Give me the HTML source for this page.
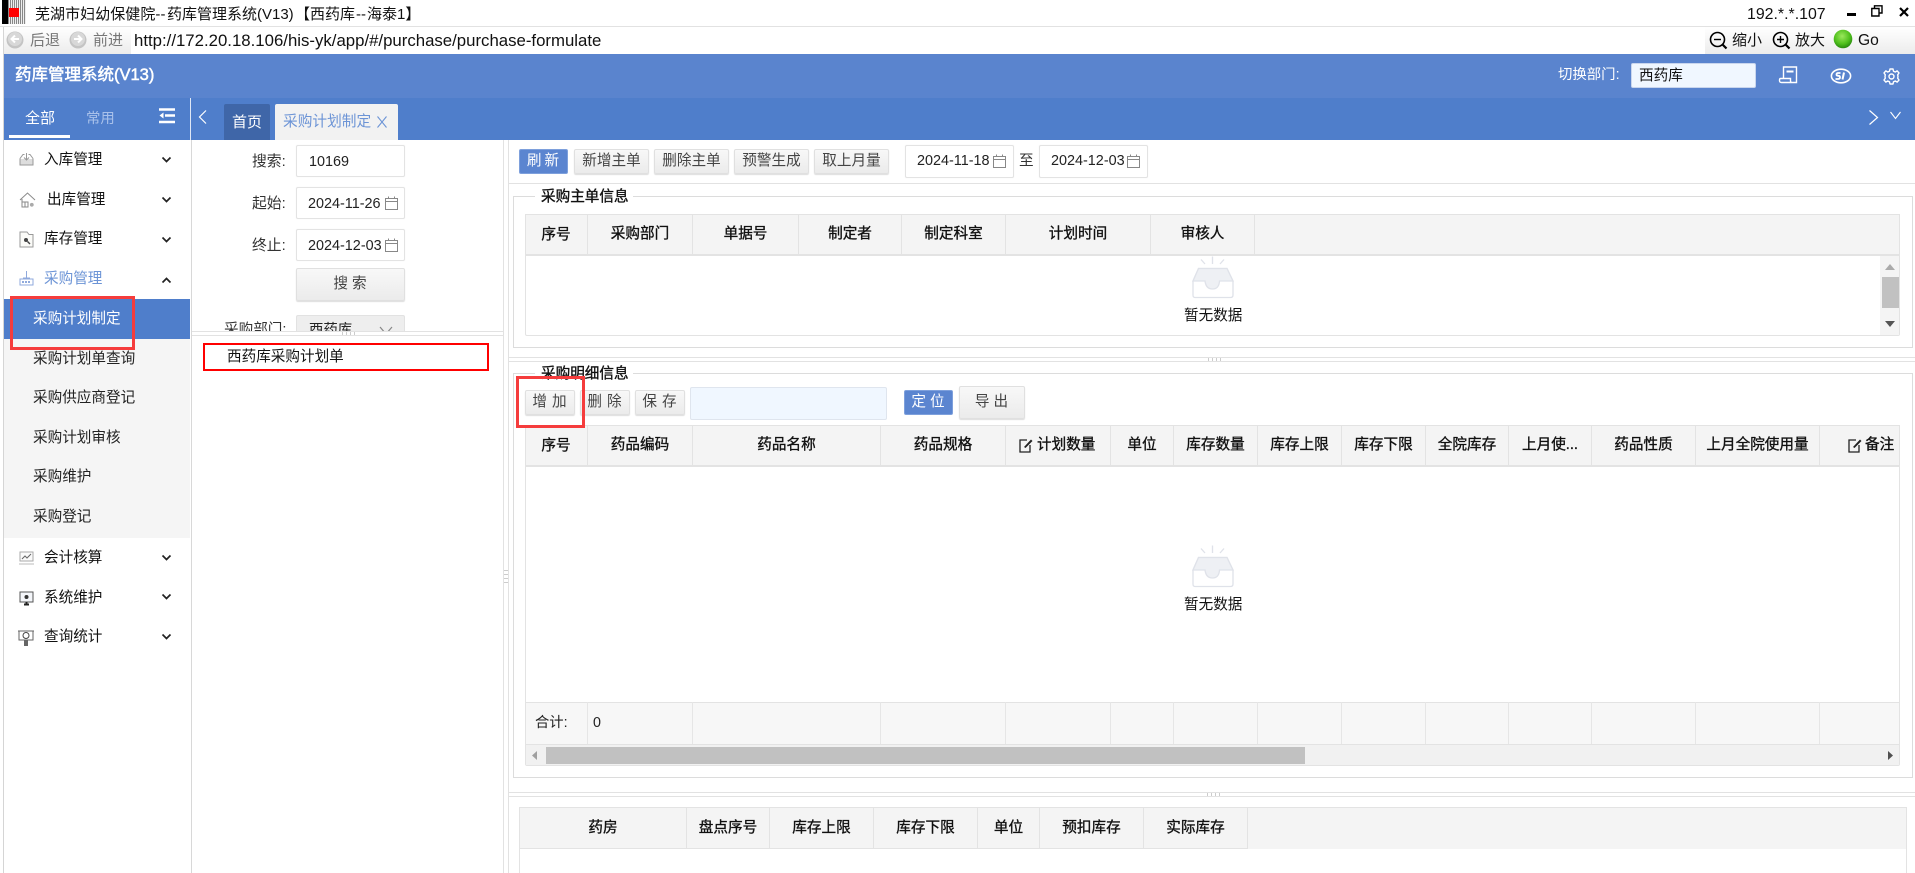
<!DOCTYPE html>
<html lang="zh"><head><meta charset="utf-8"><title>药库管理系统</title>
<style>
*{box-sizing:border-box}
html,body{margin:0;padding:0;width:1915px;height:873px;overflow:hidden;background:#fff;font-family:"Liberation Sans","Noto Sans CJK SC",sans-serif;font-size:14.5px;color:#111}
body{position:relative}
div,span,svg{position:absolute}
.t{white-space:nowrap;line-height:20px;height:20px}
.w{color:#fff}
.l{background:#e2e2e2}
.inp{background:#fff;border:1px solid #e3e3e3;border-radius:2px;box-shadow:0 0 1px #eee}
.b{background:linear-gradient(#f8f8f8,#ebebeb);border:1px solid #e0e0e0;border-radius:2px;box-shadow:0 1px 1px #ddd;text-align:center;color:#444;white-space:nowrap;font-size:14.6px}
.bl{background:#5b85d0;border:1px solid #7ea0dc;border-radius:2px;text-align:center;color:#fff;white-space:nowrap}
.h{text-align:center;font-weight:400;-webkit-text-stroke:.35px #111;white-space:nowrap;border-right:1px solid #e3e3e3;color:#111;font-size:14.6px;overflow:hidden}
.fs{border:1px solid #dcdcdc;background:transparent}
.hd{background:#f4f4f4;border:1px solid #e3e3e3;border-bottom:2px solid #e3e3e3}
.side{left:44px;color:#111;font-size:14.6px}
.sub{left:33px;font-size:14.6px;color:#222}
.ch{left:161px}
.rr{border:3px solid #f53c3c;background:transparent}
.leg{font-size:14.6px;font-weight:400;-webkit-text-stroke:.35px #111;color:#111}
</style></head><body>

<!-- title bar -->
<div style="left:2px;top:0;width:24px;height:24px;background:repeating-linear-gradient(90deg,#888 0,#888 1px,#eee 1px,#eee 2px)"></div>
<div style="left:2px;top:0;width:6px;height:24px;background:#000"></div>
<div style="left:9px;top:8px;width:10px;height:9px;background:#f00"></div>
<div class="t" style="left:35px;top:5px;font-size:15px;color:#111;letter-spacing:.05px">芜湖市妇幼保健院--</div>
<div class="t" style="left:167px;top:5px;font-size:15px;color:#111">药库管理系统(V13)</div>
<div class="t" style="left:295px;top:5px;font-size:15px;color:#111">【西药库</div>
<div class="t" style="left:356px;top:5px;font-size:15px;color:#111">--</div>
<div class="t" style="left:367px;top:5px;font-size:15px;color:#111">海泰1】</div>
<div class="t" style="left:1747px;top:5px;font-size:15.9px">192.*.*.107</div>
<div style="left:1847px;top:13px;width:9px;height:3px;background:#000"></div>
<svg style="left:1871px;top:5px" width="12" height="12" viewBox="0 0 12 12"><path d="M3.5 3V.8H11V8H8.5M.8 3.5H8V11H.8Z" fill="none" stroke="#000" stroke-width="1.4"/></svg>
<svg style="left:1899px;top:7px" width="10" height="10" viewBox="0 0 10 10"><path d="M1 1L9 9M9 1L1 9" stroke="#000" stroke-width="2.2"/></svg>
<div class="l" style="left:0;top:26px;width:1915px;height:1px"></div>

<!-- address bar -->
<div style="left:3px;top:27px;width:1px;height:846px;background:#d5d5d5"></div>
<div style="left:4px;top:27px;width:127px;height:27px;background:linear-gradient(#fff,#ececec)"></div>
<div style="left:1705px;top:27px;width:210px;height:27px;background:linear-gradient(#fff,#ececec)"></div>
<svg style="left:6px;top:30px" width="18" height="20" viewBox="0 0 18 20"><circle cx="9" cy="10" r="8.5" fill="#c4c4c4"/><circle cx="9" cy="9" r="7" fill="#d8d8d8"/><path d="M13 9H6M9 5.5L5.5 9L9 12.5" stroke="#fff" stroke-width="2" fill="none"/></svg>
<div class="t" style="left:30px;top:31px;font-size:15px;color:#777">后退</div>
<svg style="left:69px;top:30px" width="18" height="20" viewBox="0 0 18 20"><circle cx="9" cy="10" r="8.5" fill="#c4c4c4"/><circle cx="9" cy="9" r="7" fill="#d8d8d8"/><path d="M5 9H12M9 5.5L12.5 9L9 12.5" stroke="#fff" stroke-width="2" fill="none"/></svg>
<div class="t" style="left:93px;top:31px;font-size:15px;color:#777">前进</div>
<div class="t" style="left:134px;top:31px;font-size:16.8px;color:#111">http://172.20.18.106/his-yk/app/#/purchase/purchase-formulate</div>
<svg style="left:1709px;top:31px" width="19" height="19" viewBox="0 0 19 19"><circle cx="8.5" cy="8.5" r="7" fill="none" stroke="#000" stroke-width="1.6"/><path d="M5 8.5H12" stroke="#000" stroke-width="1.4"/><path d="M13.5 13.5L17.5 17.5" stroke="#000" stroke-width="2.2"/></svg>
<div class="t" style="left:1732px;top:31px;font-size:15px">缩小</div>
<svg style="left:1772px;top:31px" width="19" height="19" viewBox="0 0 19 19"><circle cx="8.5" cy="8.5" r="7" fill="none" stroke="#000" stroke-width="1.6"/><path d="M5 8.5H12M8.5 5V12" stroke="#000" stroke-width="1.4"/><path d="M13.5 13.5L17.5 17.5" stroke="#000" stroke-width="2.2"/></svg>
<div class="t" style="left:1795px;top:31px;font-size:15px">放大</div>
<svg style="left:1833px;top:29px" width="20" height="21" viewBox="0 0 20 21"><defs><radialGradient id="gb" cx=".45" cy=".35" r=".7"><stop offset="0" stop-color="#9be85c"/><stop offset=".6" stop-color="#4fbf1c"/><stop offset="1" stop-color="#1f7d0c"/></radialGradient></defs><circle cx="10" cy="10" r="9.3" fill="url(#gb)"/></svg>
<div class="t" style="left:1858px;top:31px;font-size:15.6px">Go</div>

<!-- header -->
<div style="left:4px;top:54px;width:1911px;height:44px;background:#5a84ce"></div>
<div class="t w" style="left:15px;top:65px;font-size:16.5px;-webkit-text-stroke:.5px #fff">药库管理系统(V13)</div>
<div class="t w" style="left:1558px;top:65px;font-size:14.4px">切换部门:</div>
<div style="left:1631px;top:63px;width:125px;height:25px;background:#f0f7ff;border:1px solid #c9d6ee;border-radius:2px"></div>
<div class="t" style="left:1639px;top:66px;font-size:14.6px">西药库</div>
<svg style="left:1778px;top:66px" width="20" height="18" viewBox="0 0 20 18"><path d="M5.5 12V1H18.5V16.5H14M2.5 12.5H12.5V15Q12.5 16.5 14 16.5H3.5Q1.5 16.5 1.5 14.5Q1.5 12.5 2.5 12.5" fill="none" stroke="#fff" stroke-width="1.4"/><path d="M8.5 5.5H15.5" stroke="#fff" stroke-width="2"/></svg>
<svg style="left:1830px;top:67px" width="22" height="18" viewBox="0 0 22 18"><ellipse cx="11" cy="9" rx="9.6" ry="6.8" fill="none" stroke="#fff" stroke-width="1.6"/><path d="M10.5 6H8Q6.5 6 6.5 7.4Q6.5 8.8 8.3 8.8Q10 8.8 10 10.4Q10 12 8 12H5.5" fill="none" stroke="#fff" stroke-width="1.8"/><path d="M14 5.5L12.5 12.5" stroke="#fff" stroke-width="2"/></svg>
<svg style="left:1883px;top:68px" width="17" height="17" viewBox="0 0 17 17"><path d="M7 1H10L10.5 3.2L12.3 4L14.2 2.9L16 5L14.7 6.8L15 8.5L14.7 10.2L16 12L14.2 14.1L12.3 13L10.5 13.8L10 16H7L6.5 13.8L4.7 13L2.8 14.1L1 12L2.3 10.2L2 8.5L2.3 6.8L1 5L2.8 2.9L4.7 4L6.5 3.2Z" fill="none" stroke="#fff" stroke-width="1.4" stroke-linejoin="round"/><circle cx="8.5" cy="8.5" r="2.5" fill="none" stroke="#fff" stroke-width="1.4"/></svg>

<!-- tab bar -->
<div style="left:4px;top:98px;width:1911px;height:42px;background:#4f7ecb"></div>
<div style="left:190px;top:98px;width:1px;height:42px;background:#dfe7f5"></div>
<div class="t w" style="left:25px;top:109px;font-size:15px">全部</div>
<div style="left:9px;top:135px;width:61px;height:3px;background:#fff"></div>
<div class="t" style="left:86px;top:109px;font-size:14.4px;color:#a9c1ea">常用</div>
<svg style="left:159px;top:108px" width="16" height="16" viewBox="0 0 16 16"><path d="M0 1.5H16M6 7.5H16M0 14H16" stroke="#fff" stroke-width="2.4"/><path d="M4.5 4.5L0.5 7.5L4.5 10.5Z" fill="#fff"/></svg>
<svg style="left:198px;top:109px" width="10" height="16" viewBox="0 0 10 16"><path d="M8 1.5L1.5 8L8 14.5" fill="none" stroke="#fff" stroke-width="1.2"/></svg>
<div class="w" style="left:224px;top:104px;width:46px;height:36px;background:#3f66a8;text-align:center;line-height:38px;font-size:15px;border-radius:2px 2px 0 0">首页</div>
<div style="left:275px;top:104px;width:123px;height:36px;background:#f2f2f2;border-radius:2px 2px 0 0"></div>
<div class="t" style="left:283px;top:112px;font-size:14.7px;color:#6c94d6">采购计划制定</div>
<svg style="left:377px;top:116px" width="10" height="12" viewBox="0 0 10 12"><path d="M.5 .5L9.5 11.5M9.5 .5L.5 11.5" stroke="#6c94d6" stroke-width="1.1"/></svg>
<svg style="left:1868px;top:109px" width="11" height="17" viewBox="0 0 11 17"><path d="M1.5 1.5L9.5 8.5L1.5 15.5" fill="none" stroke="#fff" stroke-width="1.2"/></svg>
<svg style="left:1890px;top:111px" width="11" height="9" viewBox="0 0 11 9"><path d="M.5 1L5.5 7.5L10.5 1" fill="none" stroke="#fff" stroke-width="1.1"/></svg>

<!-- sidebar -->
<div style="left:191px;top:140px;width:1px;height:733px;background:#d8d8d8"></div>
<svg style="left:19px;top:152px" width="15" height="15" viewBox="0 0 15 15"><rect x="1" y="7" width="13" height="6" fill="#ddd"/><path d="M1 6.5L4 2.5H5.5M14 6.5L11 2.5H9.5M1 6.5V13H14V6.5M7.5 1V7.5M5 5.5L7.5 8L10 5.5" fill="none" stroke="#999"/></svg>
<div class="t side" style="top:150px">入库管理</div>
<svg style="left:19px;top:192px" width="17" height="17" viewBox="0 0 17 17"><path d="M1 8L8.5 1L16 8M3 7V15H9V10H3M6 10V15" fill="none" stroke="#8a8a8a"/><circle cx="12.8" cy="12.8" r="1.9" fill="#aaa"/></svg>
<div class="t side" style="top:190px;left:47px">出库管理</div>
<svg style="left:19px;top:231px" width="15" height="17" viewBox="0 0 15 17"><path d="M1 1H8L10 3.5H14V16H1Z" fill="#fbfbf8" stroke="#999"/><circle cx="7" cy="9" r="2" fill="#444"/><path d="M8.5 10.5L11 13" stroke="#444" stroke-width="1.4"/></svg>
<div class="t side" style="top:229px">库存管理</div>
<svg style="left:19px;top:271px" width="15" height="15" viewBox="0 0 15 15"><path d="M7.5 0V7M4 7H11M1 8H14V14H1Z" fill="none" stroke="#8fa9dc"/><path d="M3 11H12" stroke="#8fa9dc" stroke-width="2" stroke-dasharray="2 1"/></svg>
<div class="t side" style="top:269px;color:#6c94d6">采购管理</div>
<svg class="ch" style="top:156px" width="11" height="8" viewBox="0 0 11 8"><path d="M1.5 1.5L5.5 5.5L9.5 1.5" fill="none" stroke="#222" stroke-width="1.7"/></svg>
<svg class="ch" style="top:196px" width="11" height="8" viewBox="0 0 11 8"><path d="M1.5 1.5L5.5 5.5L9.5 1.5" fill="none" stroke="#222" stroke-width="1.7"/></svg>
<svg class="ch" style="top:236px" width="11" height="8" viewBox="0 0 11 8"><path d="M1.5 1.5L5.5 5.5L9.5 1.5" fill="none" stroke="#222" stroke-width="1.7"/></svg>
<svg class="ch" style="top:276px" width="11" height="8" viewBox="0 0 11 8"><path d="M1.5 6.5L5.5 2.5L9.5 6.5" fill="none" stroke="#222" stroke-width="1.7"/></svg>
<div style="left:4px;top:299px;width:186px;height:239px;background:#f5f5f5"></div>
<div style="left:4px;top:299px;width:186px;height:40px;background:#4f7ecb"></div>
<div class="t sub w" style="top:309px;color:#fff">采购计划制定</div>
<div class="t sub" style="top:349px">采购计划单查询</div>
<div class="t sub" style="top:388px">采购供应商登记</div>
<div class="t sub" style="top:428px">采购计划审核</div>
<div class="t sub" style="top:467px">采购维护</div>
<div class="t sub" style="top:507px">采购登记</div>
<svg style="left:19px;top:551px" width="15" height="14" viewBox="0 0 15 14"><path d="M1 1H14V10H1Z" fill="#fafafa" stroke="#aaa"/><path d="M0 13H15" stroke="#bbb"/><path d="M3 8L6 5L8 7L12 3" fill="none" stroke="#666"/></svg>
<div class="t side" style="top:548px">会计核算</div>
<svg style="left:19px;top:591px" width="15" height="15" viewBox="0 0 15 15"><path d="M1 1H14V11H1Z" fill="#f4f6fa" stroke="#555"/><circle cx="7.5" cy="6" r="2" fill="#333"/><path d="M5 13.5H10M7.5 11V14" stroke="#222" stroke-width="2"/></svg>
<div class="t side" style="top:588px">系统维护</div>
<svg style="left:18px;top:630px" width="16" height="16" viewBox="0 0 16 16"><path d="M0 1H16M1 1V10H15V1" fill="none" stroke="#666"/><circle cx="8" cy="5.5" r="3" fill="none" stroke="#444"/><path d="M6 10H10V16H6Z" fill="#666"/></svg>
<div class="t side" style="top:627px">查询统计</div>
<svg class="ch" style="top:554px" width="11" height="8" viewBox="0 0 11 8"><path d="M1.5 1.5L5.5 5.5L9.5 1.5" fill="none" stroke="#222" stroke-width="1.7"/></svg>
<svg class="ch" style="top:593px" width="11" height="8" viewBox="0 0 11 8"><path d="M1.5 1.5L5.5 5.5L9.5 1.5" fill="none" stroke="#222" stroke-width="1.7"/></svg>
<svg class="ch" style="top:633px" width="11" height="8" viewBox="0 0 11 8"><path d="M1.5 1.5L5.5 5.5L9.5 1.5" fill="none" stroke="#222" stroke-width="1.7"/></svg>
<div class="rr" style="left:10px;top:296px;width:125px;height:54px"></div>

<!-- left panel -->
<div class="t" style="left:252px;top:152px;font-size:14.8px;color:#333">搜索:</div>
<div class="inp" style="left:296px;top:145px;width:109px;height:32px"></div>
<div class="t" style="left:309px;top:152px;font-size:14.4px;color:#222">10169</div>
<div class="t" style="left:252px;top:194px;font-size:14.8px;color:#333">起始:</div>
<div class="inp" style="left:296px;top:187px;width:109px;height:32px"></div>
<div class="t" style="left:308px;top:194px;font-size:14.4px;color:#222">2024-11-26</div>
<svg style="left:385px;top:196px" width="13" height="14" viewBox="0 0 13 14"><path d="M.5 2.5H12.5V13.5H.5ZM.5 5.5H12.5M3.5 .5V3M9.5 .5V3" fill="none" stroke="#888"/></svg>
<div class="t" style="left:252px;top:236px;font-size:14.8px;color:#333">终止:</div>
<div class="inp" style="left:296px;top:229px;width:109px;height:32px"></div>
<div class="t" style="left:308px;top:236px;font-size:14.4px;color:#222">2024-12-03</div>
<svg style="left:385px;top:238px" width="13" height="14" viewBox="0 0 13 14"><path d="M.5 2.5H12.5V13.5H.5ZM.5 5.5H12.5M3.5 .5V3M9.5 .5V3" fill="none" stroke="#888"/></svg>
<div class="b" style="left:296px;top:268px;width:109px;height:33px;line-height:31px;letter-spacing:4px;text-indent:3px">搜索</div>
<div style="left:192px;top:315px;width:311px;height:17px;overflow:hidden">
 <div class="t" style="left:32px;top:2px;font-size:14.6px;color:#333;line-height:26px;height:26px">采购部门:</div>
 <div style="left:104px;top:0;width:109px;height:30px;background:#eee;border:1px solid #e2e2e2;border-radius:2px"></div>
 <div class="t" style="left:117px;top:2px;line-height:26px;height:26px;font-size:14.4px;color:#222">西药库</div>
 <svg style="left:187px;top:11px" width="14" height="9" viewBox="0 0 14 9"><path d="M1 1L7 8L13 1" fill="none" stroke="#888" stroke-width="1.2"/></svg>
</div>
<div class="l" style="left:192px;top:331px;width:311px;height:1px"></div>
<div class="l" style="left:192px;top:335px;width:311px;height:1px"></div>
<div style="left:342px;top:332px;width:14px;height:3px;background:repeating-linear-gradient(90deg,#ccc 0,#ccc 1px,#fff 1px,#fff 4px)"></div>
<div style="left:203px;top:343px;width:286px;height:28px;border:2px solid #f00"></div>
<div class="t" style="left:227px;top:347px;font-size:14.6px;color:#111">西药库采购计划单</div>

<!-- vertical splitter -->
<div class="l" style="left:503px;top:140px;width:1px;height:733px"></div>
<div class="l" style="left:508px;top:140px;width:1px;height:733px"></div>
<div style="left:504px;top:568px;width:4px;height:15px;background:repeating-linear-gradient(0deg,#ccc 0,#ccc 1px,#fff 1px,#fff 4px)"></div>

<!-- toolbar -->
<div class="bl" style="left:519px;top:149px;width:49px;height:25px;line-height:23px;letter-spacing:3px;text-indent:2px;font-size:14.6px">刷新</div>
<div class="b" style="left:574px;top:149px;width:75px;height:25px;line-height:23px">新增主单</div>
<div class="b" style="left:654px;top:149px;width:75px;height:25px;line-height:23px">删除主单</div>
<div class="b" style="left:734px;top:149px;width:75px;height:25px;line-height:23px">预警生成</div>
<div class="b" style="left:814px;top:149px;width:75px;height:25px;line-height:23px">取上月量</div>
<div class="inp" style="left:905px;top:145px;width:109px;height:33px"></div>
<div class="t" style="left:917px;top:151px;font-size:14.4px;color:#222">2024-11-18</div>
<svg style="left:993px;top:154px" width="13" height="14" viewBox="0 0 13 14"><path d="M.5 2.5H12.5V13.5H.5ZM.5 5.5H12.5M3.5 .5V3M9.5 .5V3" fill="none" stroke="#888"/></svg>
<div class="t" style="left:1019px;top:151px;font-size:14.6px;color:#333">至</div>
<div class="inp" style="left:1039px;top:145px;width:109px;height:33px"></div>
<div class="t" style="left:1051px;top:151px;font-size:14.4px;color:#222">2024-12-03</div>
<svg style="left:1127px;top:154px" width="13" height="14" viewBox="0 0 13 14"><path d="M.5 2.5H12.5V13.5H.5ZM.5 5.5H12.5M3.5 .5V3M9.5 .5V3" fill="none" stroke="#888"/></svg>
<div class="l" style="left:508px;top:183px;width:1407px;height:1px"></div>

<!-- fieldset 1 -->
<div class="fs" style="left:513px;top:196px;width:1400px;height:152px"></div>
<div style="left:535px;top:190px;width:98px;height:14px;background:#fff"></div>
<div class="t leg" style="left:541px;top:187px">采购主单信息</div>
<div style="left:525px;top:214px;height:122px;border:1px solid #e3e3e3;width:1375px;border-radius:2px"></div>
<div class="hd" style="left:525px;top:214px;width:1375px;height:42px"></div>
<div class="h" style="left:525px;top:215px;width:63px;height:39px;line-height:40px">序号</div>
<div class="h" style="left:588px;top:215px;width:105px;height:39px;line-height:38px">采购部门</div>
<div class="h" style="left:693px;top:215px;width:106px;height:39px;line-height:38px">单据号</div>
<div class="h" style="left:799px;top:215px;width:103px;height:39px;line-height:38px">制定者</div>
<div class="h" style="left:902px;top:215px;width:104px;height:39px;line-height:38px">制定科室</div>
<div class="h" style="left:1006px;top:215px;width:145px;height:39px;line-height:38px">计划时间</div>
<div class="h" style="left:1151px;top:215px;width:104px;height:39px;line-height:38px">审核人</div>
<div style="left:1880px;top:256px;width:19px;height:79px;background:#f4f4f4"></div>
<svg style="left:1885px;top:264px" width="10" height="6" viewBox="0 0 10 6"><path d="M0 6L5 0L10 6Z" fill="#aaa"/></svg>
<div style="left:1882px;top:277px;width:17px;height:31px;background:#c1c1c1"></div>
<svg style="left:1885px;top:321px" width="10" height="6" viewBox="0 0 10 6"><path d="M0 0L5 6L10 0Z" fill="#555"/></svg>
<svg style="left:1192px;top:256px" width="42" height="43" viewBox="0 0 42 43"><path d="M20.5 .5V8M9 3.5L13 8M32 3.5L28 8" stroke="#dfe2e9" stroke-width="1.3" fill="none"/><path d="M6.5 12.5H35L41 25V39Q41 41.5 38.5 41.5H3Q1 41.5 1 39V25Z" fill="#fff" stroke="#dfe2e9" stroke-width="1.3"/><path d="M6.5 12.5H35L41 25H27.5Q27 33 20.5 33Q14 33 13 25H1Z" fill="#eef0f4" stroke="#dfe2e9" stroke-width="1.3"/></svg>
<div class="t" style="left:1184px;top:306px;font-size:14.6px">暂无数据</div>

<!-- splitter -->
<div class="l" style="left:509px;top:357px;width:1406px;height:1px"></div>
<div class="l" style="left:509px;top:361px;width:1406px;height:1px"></div>
<div style="left:1208px;top:358px;width:14px;height:3px;background:repeating-linear-gradient(90deg,#ccc 0,#ccc 1px,#fff 1px,#fff 4px)"></div>

<!-- fieldset 2 -->
<div class="fs" style="left:513px;top:373px;width:1400px;height:405px"></div>
<div style="left:535px;top:367px;width:98px;height:14px;background:#fff"></div>
<div class="t leg" style="left:541px;top:364px">采购明细信息</div>
<div class="b" style="left:525px;top:390px;width:50px;height:25px;line-height:23px;letter-spacing:5px;text-indent:4px">增加</div>
<div class="b" style="left:580px;top:390px;width:50px;height:25px;line-height:23px;letter-spacing:5px;text-indent:4px">删除</div>
<div class="b" style="left:635px;top:390px;width:50px;height:25px;line-height:23px;letter-spacing:5px;text-indent:4px">保存</div>
<div style="left:690px;top:387px;width:197px;height:33px;background:#f0f7ff;border:1px solid #dfe5ee;border-radius:2px"></div>
<div class="bl" style="left:904px;top:390px;width:49px;height:25px;line-height:23px;letter-spacing:4px;text-indent:3px;font-size:14.6px">定位</div>
<div class="b" style="left:959px;top:386px;width:66px;height:33px;line-height:31px;letter-spacing:4px;text-indent:3px">导出</div>

<!-- table 2 -->
<div style="left:525px;top:425px;width:1375px;height:341px;border:1px solid #e3e3e3;border-radius:2px"></div>
<div class="hd" style="left:525px;top:425px;width:1375px;height:42px"></div>
<div class="h" style="left:525px;top:426px;width:63px;height:39px;line-height:40px">序号</div>
<div class="h" style="left:588px;top:426px;width:105px;height:39px;line-height:38px">药品编码</div>
<div class="h" style="left:693px;top:426px;width:188px;height:39px;line-height:38px">药品名称</div>
<div class="h" style="left:881px;top:426px;width:125px;height:39px;line-height:38px">药品规格</div>
<div class="h" style="left:1006px;top:426px;width:105px;height:39px;line-height:38px;text-align:left;text-indent:31px">计划数量</div>
<svg style="left:1019px;top:438px" width="14" height="15" viewBox="0 0 14 15"><path d="M8 2H1V14H11V7" fill="none" stroke="#222" stroke-width="1.3"/><path d="M5 9L12 1.5L13.5 3L6.5 10Z" fill="#222"/></svg>
<div class="h" style="left:1111px;top:426px;width:63px;height:39px;line-height:38px">单位</div>
<div class="h" style="left:1174px;top:426px;width:84px;height:39px;line-height:38px">库存数量</div>
<div class="h" style="left:1258px;top:426px;width:84px;height:39px;line-height:38px">库存上限</div>
<div class="h" style="left:1342px;top:426px;width:84px;height:39px;line-height:38px">库存下限</div>
<div class="h" style="left:1426px;top:426px;width:83px;height:39px;line-height:38px">全院库存</div>
<div class="h" style="left:1509px;top:426px;width:83px;height:39px;line-height:38px">上月使...</div>
<div class="h" style="left:1592px;top:426px;width:104px;height:39px;line-height:38px">药品性质</div>
<div class="h" style="left:1696px;top:426px;width:124px;height:39px;line-height:38px">上月全院使用量</div>
<div class="h" style="left:1820px;top:426px;width:79px;height:39px;line-height:38px;border-right:0;text-align:left;text-indent:45px">备注</div>
<svg style="left:1848px;top:438px" width="14" height="15" viewBox="0 0 14 15"><path d="M8 2H1V14H11V7" fill="none" stroke="#222" stroke-width="1.3"/><path d="M5 9L12 1.5L13.5 3L6.5 10Z" fill="#222"/></svg>
<svg style="left:1192px;top:545px" width="42" height="43" viewBox="0 0 42 43"><path d="M20.5 .5V8M9 3.5L13 8M32 3.5L28 8" stroke="#dfe2e9" stroke-width="1.3" fill="none"/><path d="M6.5 12.5H35L41 25V39Q41 41.5 38.5 41.5H3Q1 41.5 1 39V25Z" fill="#fff" stroke="#dfe2e9" stroke-width="1.3"/><path d="M6.5 12.5H35L41 25H27.5Q27 33 20.5 33Q14 33 13 25H1Z" fill="#eef0f4" stroke="#dfe2e9" stroke-width="1.3"/></svg>
<div class="t" style="left:1184px;top:595px;font-size:14.6px">暂无数据</div>
<!-- footer -->
<div style="left:526px;top:702px;width:1373px;height:43px;background:#f7f7f7;border-top:1px solid #e3e3e3;border-bottom:1px solid #e3e3e3"></div>
<div style="left:587px;top:702px;width:1px;height:42px;background:#e6e6e6"></div>
<div style="left:692px;top:702px;width:1px;height:42px;background:#e6e6e6"></div>
<div style="left:880px;top:702px;width:1px;height:42px;background:#e6e6e6"></div>
<div style="left:1005px;top:702px;width:1px;height:42px;background:#e6e6e6"></div>
<div style="left:1110px;top:702px;width:1px;height:42px;background:#e6e6e6"></div>
<div style="left:1173px;top:702px;width:1px;height:42px;background:#e6e6e6"></div>
<div style="left:1257px;top:702px;width:1px;height:42px;background:#e6e6e6"></div>
<div style="left:1341px;top:702px;width:1px;height:42px;background:#e6e6e6"></div>
<div style="left:1425px;top:702px;width:1px;height:42px;background:#e6e6e6"></div>
<div style="left:1508px;top:702px;width:1px;height:42px;background:#e6e6e6"></div>
<div style="left:1591px;top:702px;width:1px;height:42px;background:#e6e6e6"></div>
<div style="left:1695px;top:702px;width:1px;height:42px;background:#e6e6e6"></div>
<div style="left:1819px;top:702px;width:1px;height:42px;background:#e6e6e6"></div>
<div class="t" style="left:535px;top:713px;font-size:14.3px;color:#222">合计:</div>
<div class="t" style="left:593px;top:713px;font-size:14.3px;color:#222">0</div>
<div style="left:526px;top:745px;width:1373px;height:20px;background:#f1f1f1"></div>
<svg style="left:532px;top:751px" width="5" height="9" viewBox="0 0 5 9"><path d="M5 0L0 4.5L5 9Z" fill="#a0a0a0"/></svg>
<div style="left:546px;top:747px;width:759px;height:17px;background:#c1c1c1"></div>
<svg style="left:1888px;top:751px" width="5" height="9" viewBox="0 0 5 9"><path d="M0 0L5 4.5L0 9Z" fill="#505050"/></svg>

<!-- red highlight over add button -->
<div class="rr" style="left:516px;top:376px;width:69px;height:52px"></div>

<!-- splitter -->
<div class="l" style="left:509px;top:792px;width:1406px;height:1px"></div>
<div class="l" style="left:509px;top:796px;width:1406px;height:1px"></div>
<div style="left:1207px;top:793px;width:14px;height:3px;background:repeating-linear-gradient(90deg,#ccc 0,#ccc 1px,#fff 1px,#fff 4px)"></div>

<!-- table 3 -->
<div style="left:519px;top:807px;width:1388px;height:66px;border:1px solid #e3e3e3;border-bottom:0;border-radius:2px 2px 0 0"></div>
<div class="hd" style="left:519px;top:807px;width:1388px;height:42px;border-bottom:0"></div>
<div style="left:519px;top:848px;width:728px;height:1px;background:#e3e3e3"></div>
<div class="h" style="left:520px;top:808px;width:167px;height:41px;line-height:40px">药房</div>
<div class="h" style="left:687px;top:808px;width:83px;height:41px;line-height:40px">盘点序号</div>
<div class="h" style="left:770px;top:808px;width:104px;height:41px;line-height:40px">库存上限</div>
<div class="h" style="left:874px;top:808px;width:104px;height:41px;line-height:40px">库存下限</div>
<div class="h" style="left:978px;top:808px;width:62px;height:41px;line-height:40px">单位</div>
<div class="h" style="left:1040px;top:808px;width:104px;height:41px;line-height:40px">预扣库存</div>
<div class="h" style="left:1144px;top:808px;width:104px;height:41px;line-height:40px">实际库存</div>

</body></html>
